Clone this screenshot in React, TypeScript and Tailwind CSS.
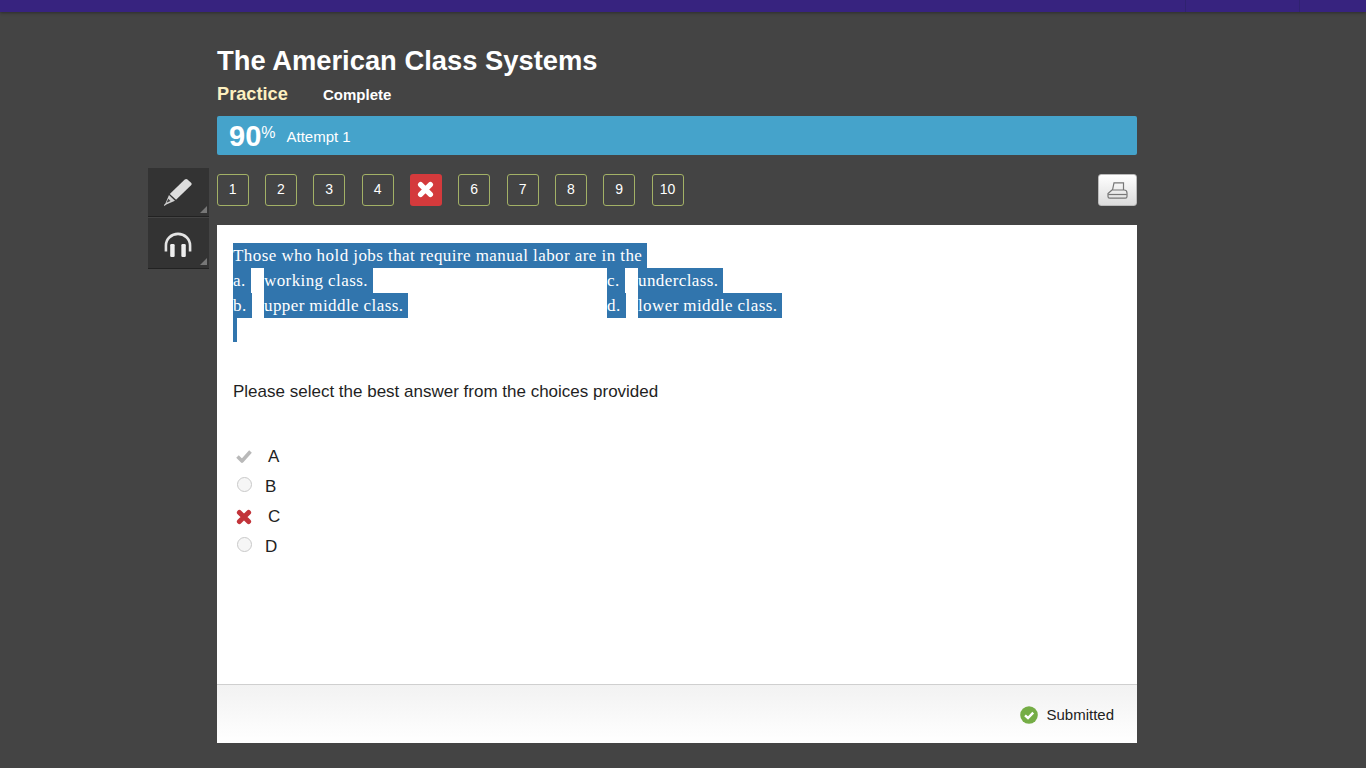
import React from "react";

const Sel = ({ children }: { children: React.ReactNode }) => (
  <span className="inline-block h-[25px] bg-[#3175ad] pr-[5px] leading-[25px] text-white whitespace-nowrap">{children}</span>
);

const Nav = ({ n }: { n: number }) => (
  <div className="flex h-[32px] w-[32px] items-center justify-center rounded-[3px] border border-[#a3b166] pb-[1px] text-[14px] text-white">{n}</div>
);

const Wrong = ({ className }: { className: string }) => (
  <svg viewBox="0 0 16 16" className={className}>
    <path d="M3.4 3.4 12.6 12.6M12.6 3.4 3.4 12.6" stroke="currentColor" strokeWidth="5" strokeLinecap="round" fill="none" />
  </svg>
);

const Radio = () => (
  <span className="mb-[5px] ml-[4px] inline-block h-[15px] w-[15px] rounded-full border border-[#c9c9c9] bg-[#f6f6f6]" />
);

const Corner = () => (
  <span className="absolute bottom-[3px] right-[2px] h-0 w-0 border-b-[7px] border-l-[7px] border-b-[#777] border-l-transparent" />
);

export default function App() {
  return (
    <div className="min-h-[768px] overflow-hidden bg-[#444444] font-['Liberation_Sans',Arial,sans-serif]">
      <div className="flex h-[12px] justify-end bg-[#37237f] shadow-[0_1px_3px_rgba(0,0,0,0.35)]">
        <div className="mr-[66px] h-full w-[115px] border-x border-[#2f2270]" />
      </div>
      <div className="ml-[148px] w-[989px]">
        <div className="ml-[69px]">
          <h1 className="mt-[32px] h-[34px] text-[27.35px] font-bold leading-[34px] text-white">The American Class Systems</h1>
          <div className="mt-[5px] flex h-[24px] items-center">
            <span className="w-[106px] text-[18.2px] font-bold text-[#fdf0c0]">Practice</span>
            <span className="text-[15px] font-bold text-white">Complete</span>
          </div>
          <div className="mt-[9px] flex h-[39px] items-center rounded-[2px] bg-[#45a3cb] pl-[12px] text-white">
            <span className="mt-[2px] text-[29px] font-bold leading-none">90</span>
            <span className="mb-[6px] text-[16px]">%</span>
            <span className="ml-[11px] mt-[3px] text-[15px]">Attempt 1</span>
          </div>
        </div>
        <div className="mt-[13px] flex items-start">
          <div className="w-[61px]">
            <div className="relative flex h-[49px] items-center justify-center border-b border-[#222] bg-[#333333] pr-[2px]">
              <svg viewBox="0 0 32 32" className="h-[31px] w-[31px]">
                <path d="M23.5 2.5C24.5 1.8 25.5 1.8 26.3 2.5L30 6C30.8 6.8 30.8 7.8 30 8.6L14.5 23.5 8 17.5Z" fill="#dedede" />
                <path d="M7.2 18.7 13.4 24.6 4.5 28.4 2.5 30 2 29 3.5 27.4Z" fill="#d2d2d2" />
                <path d="M4.6 26.5 8.8 24.8 6.5 22.4Z" fill="#444" />
              </svg>
              <Corner />
            </div>
            <div className="relative mt-px flex h-[51px] items-center justify-center border-b border-[#222] bg-[#333333] pr-[2px] pt-[3px]">
              <svg viewBox="0 0 32 28" className="h-[26px] w-[30px]">
                <path d="M3 21V14.5a13 12.5 0 0 1 26 0v6.5" stroke="#e4e4e4" strokeWidth="2.8" fill="none" />
                <rect x="7.6" y="13" width="4.8" height="14" rx="1.3" fill="#eeeeee" />
                <rect x="19.6" y="13" width="4.8" height="14" rx="1.3" fill="#eeeeee" />
              </svg>
              <Corner />
            </div>
          </div>
          <div className="ml-[8px] min-w-0 flex-1">
            <div className="mt-[6px] flex h-[32px] items-center justify-between">
              <div className="ml-[-0.4px] flex gap-[16.33px]">
                {[1, 2, 3, 4].map((n) => <Nav key={n} n={n} />)}
                <div className="flex h-[32px] w-[32px] items-center justify-center rounded-[3px] bg-[#d43a3c] pb-[2px] text-white">
                  <Wrong className="h-[17px] w-[17px]" />
                </div>
                {[6, 7, 8, 9, 10].map((n) => <Nav key={n} n={n} />)}
              </div>
              <div className="flex h-[32px] w-[39px] items-center justify-center rounded-[3px] border border-[#bbb] bg-gradient-to-b from-white to-[#dcdcdc]">
                <svg viewBox="0 0 21 17" className="h-[17px] w-[21px]" fill="none" stroke="#777" strokeWidth="1.2">
                  <path d="M5.5 8 7 .8H16.5V8" />
                  <path d="M5 8 1 11.5V14.5C1 15.6 1.5 16.2 2.6 16.2H18.4C19.5 16.2 20 15.6 20 14.5V11C20 9 18.8 8 17 8H5Z" />
                  <path d="M1.2 12.5H19.8" />
                </svg>
              </div>
            </div>
            <div className="mt-[19px] flex h-[518px] flex-col bg-white">
              <div className="flex-1 px-[16px] pt-[18px]">
                <div className="font-['Liberation_Serif',serif] text-[17px] tracking-[0.4px]">
                  <div className="h-[25px] tracking-[0.43px]"><Sel>Those who hold jobs that require manual labor are in the</Sel></div>
                  <div className="grid h-[25px] grid-cols-[31px_343px_31px_1fr]">
                    <div><Sel>a.</Sel></div><div><Sel>working class.</Sel></div>
                    <div><Sel>c.</Sel></div><div><Sel>underclass.</Sel></div>
                  </div>
                  <div className="grid h-[25px] grid-cols-[31px_343px_31px_1fr]">
                    <div><Sel>b.</Sel></div><div><Sel>upper middle class.</Sel></div>
                    <div><Sel>d.</Sel></div><div><Sel>lower middle class.</Sel></div>
                  </div>
                  <div className="h-[24px] w-[4px] bg-[#3175ad]" />
                </div>
                <p className="mt-[40px] h-[20px] text-[17px] leading-[20px] text-[#1f1f1f]">Please select the best answer from the choices provided</p>
                <div className="mt-[40px] text-[17px] text-[#222]">
                  <div className="flex h-[30px] items-center">
                    <svg viewBox="0 0 16 16" className="mb-[3px] ml-[3px] h-[16px] w-[16px]">
                      <path d="M1.5 8.5 6 13 14.5 3.5" stroke="#b9b9b9" strokeWidth="3.6" fill="none" strokeLinejoin="round" />
                    </svg>
                    <span className="ml-[16px]">A</span>
                  </div>
                  <div className="flex h-[30px] items-center"><Radio /><span className="ml-[13px]">B</span></div>
                  <div className="flex h-[30px] items-center">
                    <Wrong className="ml-[3px] h-[16px] w-[16px] text-[#c2343a]" />
                    <span className="ml-[16px]">C</span>
                  </div>
                  <div className="flex h-[30px] items-center"><Radio /><span className="ml-[13px]">D</span></div>
                </div>
              </div>
              <div className="flex h-[59px] items-center justify-end border-t border-[#cfcfcf] bg-gradient-to-b from-[#f2f2f2] to-white pr-[23px] pt-[1px]">
                <svg viewBox="0 0 18 18" className="mt-[1px] h-[18px] w-[18px]">
                  <circle cx="9" cy="9" r="8.8" fill="#75ad46" />
                  <path d="M5 9.3 8 12 13.2 6.6" stroke="#fff" strokeWidth="2.4" fill="none" />
                </svg>
                <span className="ml-[8px] mb-[-1px] text-[15px] text-[#222]">Submitted</span>
              </div>
            </div>
          </div>
        </div>
      </div>
    </div>
  );
}
